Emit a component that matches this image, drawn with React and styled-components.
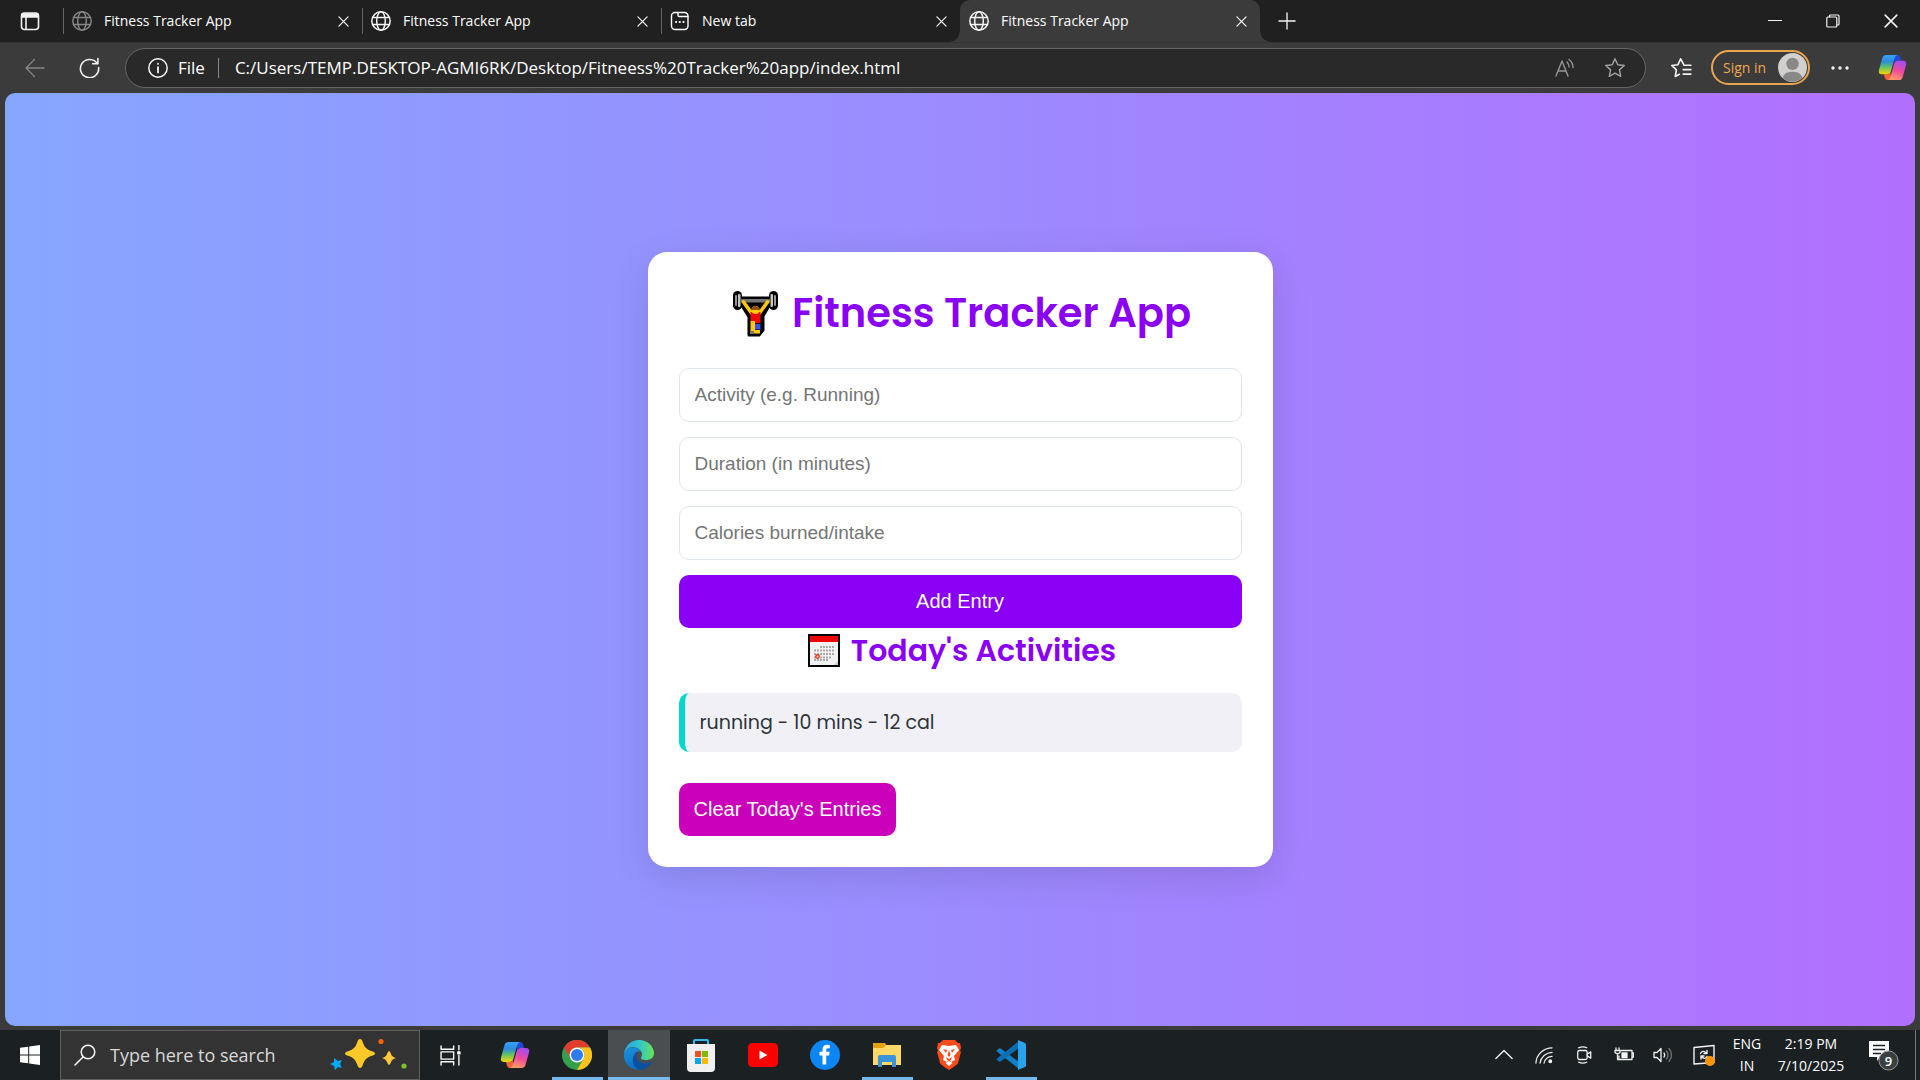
import React, { useId, useState } from "react";
import styled, { createGlobalStyle, css } from "styled-components";

const ui = `"Open Sans", "Noto Sans", sans-serif`;
const arial = `"Liberation Sans", Arial, sans-serif`;
const display = `Poppins, Inter, sans-serif`;

const GlobalStyle = createGlobalStyle`
  *, *::before, *::after { box-sizing: border-box; }
  body { margin: 0; background: #3b3b3b; font-family: ${ui}; }
  button, input { font: inherit; color: inherit; }
  button { border: 0; padding: 0; background: none; cursor: pointer; }
  h1, h2, ul { margin: 0; padding: 0; }
  svg { display: block; flex: none; }
`;

const Desktop = styled.div`
  display: flex;
  flex-direction: column;
  min-height: 100vh;
  color: #fff;
`;

/* ---------- browser chrome ---------- */
const TabStrip = styled.header`
  display: flex;
  align-items: stretch;
  height: 42px;
  background: #202020;
  padding-left: 5px;
`;
const IconButton = styled.button`
  display: flex;
  align-items: center;
  justify-content: center;
  flex: none;
  width: ${(p) => p.$w || 50}px;
  color: ${(p) => p.$color || "#f2f2f2"};
`;
const Tabs = styled.nav`
  display: flex;
  align-items: center;
  margin-left: 8px;
`;
const Tab = styled.div`
  display: flex;
  align-items: center;
  width: 299px;
  height: 26px;
  padding-left: 8px;
  border-left: 1px solid #666;
  ${(p) =>
    p.$active &&
    css`
      align-self: stretch;
      height: auto;
      border-left: 0;
      width: 300px;
      padding-left: 9px;
      background: #3b3b3b;
      border-radius: 10px 10px 0 0;
      position: relative;
      &::before,
      &::after {
        content: "";
        position: absolute;
        bottom: 0;
        width: 10px;
        height: 10px;
      }
      &::before {
        right: 100%;
        background: radial-gradient(circle at 0 0, transparent 9px, #3b3b3b 10px);
      }
      &::after {
        left: 100%;
        background: radial-gradient(circle at 100% 0, transparent 9px, #3b3b3b 10px);
      }
    `}
`;
const TabTitle = styled.button`
  display: flex;
  align-items: center;
  gap: 12px;
  flex: 1;
  font-size: 14px;
  line-height: 20px;
  white-space: nowrap;
`;
const WindowControls = styled.div`
  display: flex;
  margin-left: auto;
`;
const Toolbar = styled.div`
  display: flex;
  align-items: center;
  height: 51px;
  padding: 0 5px 1px 8px;
  border-top: 1px solid #333;
`;
const AddressBar = styled.div`
  display: flex;
  align-items: center;
  flex: 1;
  height: 40px;
  margin: 0 9px 0 8px;
  padding: 0 5px 0 22px;
  background: #292929;
  border: 1px solid #666;
  border-radius: 20px;
  font-size: 17px;
`;
const SiteInfo = styled.button`
  display: flex;
  align-items: center;
  gap: 10px;
  height: 20px;
  line-height: 20px;
  padding-right: 13px;
  border-right: 1px solid #888;
`;
const UrlInput = styled.input`
  flex: 1;
  min-width: 0;
  padding: 0;
  margin-left: 16px;
  border: 0;
  outline: 0;
  background: none;
`;
const SignIn = styled.button`
  display: flex;
  align-items: center;
  justify-content: space-between;
  width: 99px;
  height: 35px;
  margin-left: 4px;
  padding: 0 1px 0 10px;
  border: 2px solid #eba550;
  border-radius: 18px;
  color: #f0a850;
  font-size: 14px;
  white-space: nowrap;
`;

/* ---------- web page ---------- */
const Page = styled.main`
  flex: 1;
  display: flex;
  align-items: center;
  justify-content: center;
  margin: 0 5px 4px;
  padding: 20px;
  border-radius: 10px;
  background: linear-gradient(to right, #86a6ff, #b26fff);
`;
const Card = styled.section`
  width: 100%;
  max-width: 625px;
  padding: 31px;
  background: #fff;
  border-radius: 19px;
  box-shadow: 0 10px 38px rgba(0, 0, 0, 0.12);
  color: #2d3436;
  font-family: ${display};
`;
const Title = styled.h1`
  display: flex;
  align-items: center;
  justify-content: center;
  gap: 14px;
  margin-bottom: 25px;
  padding-left: 4px;
  color: #8900f5;
  font-size: 40px;
  line-height: 60px;
  font-weight: 600;
`;
const Subtitle = styled.h2`
  display: flex;
  align-items: center;
  justify-content: center;
  gap: 11px;
  margin-bottom: 20px;
  padding-left: 4px;
  color: #8900f5;
  font-size: 30px;
  line-height: 45px;
  font-weight: 600;
`;
const EntryForm = styled.form`
  display: flex;
  flex-direction: column;
  gap: 15px;
  font-family: ${arial};
`;
const Field = styled.input`
  width: 100%;
  height: 54px;
  padding: 0 15px;
  border: 1px solid #dfe6e9;
  border-radius: 10px;
  background: #fff;
  font-size: 19px;
  &::placeholder { color: #757575; opacity: 1; }
`;
const ActionButton = styled.button`
  height: 53px;
  padding: 0 15px;
  border-radius: 10px;
  background: ${(p) => (p.$danger ? "#cb00ba" : "#8900f5")};
  color: #fff;
  font-family: ${arial};
  font-size: 20px;
`;
const EntryList = styled.ul`
  list-style: none;
  margin-bottom: 31px;
`;
const Entry = styled.li`
  padding: 15px;
  border-left: 6px solid #00d8cc;
  border-radius: 10px;
  background: #f1f0f7;
  font-size: 19px;
  line-height: 29px;
`;

/* ---------- taskbar ---------- */
const Taskbar = styled.footer`
  display: flex;
  height: 50px;
  background: #1b2022;
`;
const SearchBox = styled.label`
  display: flex;
  align-items: center;
  width: 360px;
  margin-right: 2px;
  padding: 0 11px 0 13px;
  background: #333;
  border: 1px solid #606060;
`;
const SearchInput = styled.input`
  flex: 1;
  min-width: 0;
  padding: 0;
  margin-left: 14px;
  border: 0;
  outline: 0;
  background: none;
  font-size: 18px;
  &::placeholder { color: #d8d8d8; opacity: 1; }
`;
const AppButton = styled.button`
  display: flex;
  align-items: center;
  justify-content: center;
  flex: none;
  width: 62px;
  background: ${(p) =>
    p.$state === "active"
      ? "linear-gradient(#76b9ed, #76b9ed) bottom / 100% 3px no-repeat #4b4e50"
      : p.$state === "running"
      ? "linear-gradient(#76b9ed, #76b9ed) bottom / 51px 3px no-repeat"
      : "none"};
`;
const TaskView = styled(AppButton)`
  padding-right: 5px;
`;
const Tray = styled.div`
  display: flex;
  align-items: stretch;
  margin-left: auto;
  padding-right: 4px;
`;
const TrayText = styled.button`
  width: ${(p) => p.$w}px;
  font-size: 14px;
  line-height: 22px;
  text-align: center;
  white-space: nowrap;
`;
const Notifications = styled.button`
  width: 63px;
  padding-left: 16px;
  border-right: 1px solid #777;
`;

/* ---------- icons ---------- */
const Line = ({ s = 20, w = 1.3, vb = 20, children, ...rest }) => (
  <svg width={s} height={s} viewBox={`0 0 ${vb} ${vb}`} fill="none" stroke="currentColor" strokeWidth={w} strokeLinecap="round" strokeLinejoin="round" aria-hidden="true" {...rest}>
    {children}
  </svg>
);
const Globe = ({ dim }) => (
  <Line w="1.5" color={dim ? "#858585" : "#f5f5f5"}>
    <circle cx="10" cy="10" r="9.2" />
    <ellipse cx="10" cy="10" rx="4.3" ry="9.2" />
    <path d="M1.6 6.5h16.8M1.6 13.5h16.8" />
  </Line>
);
const NewTabIcon = () => (
  <Line w="1.4">
    <rect x="1.500" y="1.500" width="16.500" height="17" rx="3.5" />
    <path d="M8 1.8v2.4q0 1.3 1.3 1.3h8.4" />
    <path d="M6 11h.2M9.7 11h.2M13.4 11h.2" strokeWidth="2" />
  </Line>
);
const Cross = ({ s = 11 }) => (
  <Line s={s} vb="12" w="1.4"><path d="M1 1l10 10M11 1L1 11" /></Line>
);
const star = "M10 1.6l2.5 5.4 5.9.7-4.4 4 1.2 5.9L10 14.7l-5.2 2.9L6 11.7l-4.4-4 5.9-.7z";

const Copilot = ({ s = 30 }) => {
  const id = useId();
  return (
    <svg width={s} height={s} viewBox="0 0 30 30" aria-hidden="true">
      <defs>
        <linearGradient id={id + "a"} x1="0" y1="0" x2="0" y2="1">
          <stop offset="0" stopColor="#35a2f5" /><stop offset=".35" stopColor="#2d8bdd" /><stop offset=".62" stopColor="#5fc06a" /><stop offset="1" stopColor="#f5d800" />
        </linearGradient>
        <linearGradient id={id + "b"} x1=".6" y1="0" x2=".3" y2="1">
          <stop offset="0" stopColor="#a64af0" /><stop offset=".5" stopColor="#f04a9e" /><stop offset="1" stopColor="#ff9f62" />
        </linearGradient>
      </defs>
      <path d="M16 2h4q2.4 0 3 2.300l1 3.700h-4q-2 0-2.700 2z" fill="#2547d8" />
      <path d="M14 28h-4q-2.400 0-3-2.300L6 22h4q2 0 2.700-2z" fill="#f2643b" />
      <path d="M8.500 2H20q-2 .4-2.700 3l-4 14q-.9 3-4 3H4q-4 0-3-4.500L4.500 5q.9-3 4-3z" fill={`url(#${id}a)`} />
      <path d="M21.500 28H10q2-.4 2.700-3l4-14q.9-3 4-3H26q4 0 3 4.500L25.500 25q-.9 3-4 3z" fill={`url(#${id}b)`} />
    </svg>
  );
};
const Avatar = () => (
  <svg width="29" height="29" viewBox="0 0 28 28" aria-hidden="true">
    <circle cx="14" cy="14" r="14" fill="#d2d0ce" />
    <circle cx="14" cy="10.500" r="6" fill="#8a8886" />
    <path d="M4.500 24c1-4 4-6 9.500-6s8.500 2 9.500 6a14 14 0 0 1-19 0z" fill="#8a8886" />
  </svg>
);
const Lifter = () => (
  <svg width="45" height="47" viewBox="0 0 45 47" role="img" aria-label="weight lifter">
    <path d="M8 8H37V14L30 26V40L26 45H16V27L8 14Z" fill="#000" stroke="#000" strokeWidth="3" strokeLinejoin="round" />
    <rect x="0" y="1" width="9" height="19" rx="4.500" fill="#000" />
    <rect x="36" y="1" width="9" height="19" rx="4.500" fill="#000" />
    <rect x="8" y="9" width="29" height="3.500" fill="#777" />
    <rect x="2" y="5" width="2" height="11" rx="1" fill="#999" /><rect x="5" y="4" width="2.500" height="13" rx="1" fill="#c4c4c4" />
    <rect x="41" y="5" width="2" height="11" rx="1" fill="#999" /><rect x="37.500" y="4" width="2.500" height="13" rx="1" fill="#c4c4c4" />
    <path d="M10.500 12L18.500 23M34.500 12L26.500 23" stroke="#ffc800" strokeWidth="3.600" strokeLinecap="round" />
    <path d="M17.500 22h10v11H17.500z" fill="#ee0505" />
    <circle cx="22.500" cy="20" r="4" fill="#ffc800" />
    <path d="M18.500 20a4 4 0 0 1 8 0z" fill="#8e5014" />
    <path d="M17.500 31h4.500v9h5v3.500h-9.500z" fill="#ffc800" />
    <path d="M22 34h5.500v5.500H22z" fill="#3d51ee" />
    <path d="M17 41h4v3h-4z" fill="#777" />
  </svg>
);
const Calendar = () => (
  <svg width="32" height="33" viewBox="0 0 32 33" role="img" aria-label="calendar">
    <path d="M0 0h32v33H0z" fill="#000" />
    <path d="M2 2h28v29H2z" fill="#f2f2f2" />
    <path d="M2 2h28v6H2z" fill="#ee0505" />
    <path d="M12 13h15M6 16.500h21M6 20h21M6 23.500h18M6 26h14" stroke="#aaa" strokeWidth="2" strokeDasharray="2 1" />
    <circle cx="9.500" cy="22.500" r="1.700" fill="#fff" stroke="#ee3415" strokeWidth="1.500" />
    <path d="M30 27v4h-4z" fill="#ccc" />
  </svg>
);
const Sparkles = () => (
  <svg width="78" height="34" viewBox="0 0 78 34" aria-hidden="true">
    <path d="M30 1q2 0 3 4 2 6 8 8 4 1 4 2.500t-4 2.500q-6 2-8 8-1 4-3 4t-3-4q-2-6-8-8-4-1-4-2.500t4-2.500q6-2 8-8 1-4 3-4z" fill="#ffc928" />
    <path d="M59 13q1 0 2 3 1 3 5 4-4 1-5 4-1 3-2 3t-2-3q-1-3-5-4 4-1 5-4 1-3 2-3z" fill="#ffc83d" />
    <path d="M4 20l4 3 4-1-2 4 2 4-4-1-3 3-1-4-4-2 4-2z" fill="#00a9f4" />
    <circle cx="51" cy="3.500" r="2.600" fill="#f7630c" /><circle cx="74" cy="28" r="2.600" fill="#7ac32f" />
  </svg>
);
const Chrome = () => (
  <svg width="30" height="30" viewBox="0 0 30 30" aria-hidden="true">
    <circle cx="15" cy="15" r="15" fill="#34a04b" />
    <path d="M2 7.500A15 15 0 0 1 28 7.500H15a7.500 7.500 0 0 0-6.500 11.250z" fill="#e33b2e" />
    <path d="M28 7.500A15 15 0 0 1 15 30l6.500-11.250A7.500 7.500 0 0 0 15 7.500z" fill="#fcc31e" />
    <circle cx="15" cy="15" r="7.500" fill="#fff" /><circle cx="15" cy="15" r="6" fill="#2d7cf0" />
  </svg>
);
const Edge = () => (
  <svg width="30" height="30" viewBox="0 0 30 30" aria-hidden="true">
    <defs>
      <linearGradient id="edgeTop"><stop offset="0" stopColor="#2aa5dc" /><stop offset=".5" stopColor="#2fc4cf" /><stop offset="1" stopColor="#69e553" /></linearGradient>
      <linearGradient id="edgeSide" x1="0" y1="0" x2=".3" y2="1"><stop offset="0" stopColor="#1b92de" /><stop offset="1" stopColor="#0b72c8" /></linearGradient>
    </defs>
    <path d="M0 14C1 6 7 0 15 0c9 0 15 7 15 13 0 5-4 7-8 7-4 0-5-1-5-2 0-.8 1-1 1-4 0-3-4-7-9-7-4 0-7 3-9 7z" fill="url(#edgeTop)" />
    <path d="M0 14c2-5 6-6.500 9-6.500 4 0 6.500 2 7.500 4-4-1-7 3-7 7 0 7 5 10 9 10.500C9 32-1 24 0 14z" fill="url(#edgeSide)" />
    <path d="M14 12c-2 2-2 4-1.500 6 1.500 5 7.500 6.500 14.500 3.500.6 0 .8.600.4 1C25 27 20 30 15 30c-5-2-6.500-7-6-11 .4-4 3-7 5-7z" fill="#0c50a0" />
  </svg>
);
const Store = () => (
  <svg width="30" height="34" viewBox="0 0 30 34" aria-hidden="true">
    <path d="M8 8V3q0-1 1-1h12q1 0 1 1v5" fill="none" stroke="#35b5e9" strokeWidth="2.200" />
    <path d="M1 6h28v24q0 4-4 4H5q-4 0-4-4z" fill="#f0f0f0" />
    <path d="M9 13h6v6H9z" fill="#f25022" /><path d="M16 13h6v6h-6z" fill="#7fba00" /><path d="M9 20h6v6H9z" fill="#00a4ef" /><path d="M16 20h6v6h-6z" fill="#ffb900" />
  </svg>
);
const YouTube = () => (
  <svg width="30" height="24" viewBox="0 0 30 24" aria-hidden="true"><rect width="30" height="24" rx="4.500" fill="#f00" /><path d="M11.500 7.500v9l8-4.500z" fill="#fff" /></svg>
);
const Facebook = () => (
  <svg width="30" height="30" viewBox="0 0 30 30" aria-hidden="true"><circle cx="15" cy="15" r="15" fill="#0d86f5" /><path d="M12.500 24.500v-9H9.500v-3.800h3V9.500c0-3 1.800-4.700 4.500-4.700l2.800.2v3.300h-1.700c-1.500 0-1.900.8-1.900 1.800v1.600h3.500l-.6 3.800h-2.900v9z" fill="#fff" /></svg>
);
const Explorer = () => (
  <svg width="28" height="24" viewBox="0 0 28 24" aria-hidden="true">
    <path d="M0 0h12l2 3-2 3H0z" fill="#e3a20a" /><path d="M0 5h10l3-3h15v20H0z" fill="#ffd868" />
    <path d="M5 24V14q0-2 2-2h14q2 0 2 2v10h-4v-5H9v5z" fill="#3b94d8" />
  </svg>
);
const Brave = () => (
  <svg width="26" height="30" viewBox="0 0 26 30" aria-hidden="true">
    <path d="M7 0h12l3 3h2l1 5-1 3 1 1-3 11q-1 2-9 7-8-5-9-7L1 12l1-1-1-3 1-5h2z" fill="#fb4a1c" />
    <path d="M6 5l7 1 7-1 3 5-5 6 1 4-4 2-2-3-2 3-4-2 1-4-5-6z" fill="#fff" />
    <path d="M7 9l4 1-1 3zM19 9l-4 1 1 3zM13 10l1.500 5-1.500 2-1.500-2zM10 17l3 2 3-2-1 3h-4z" fill="#fb4a1c" />
    <path d="M9.500 23l3.500-2 3.500 2-3.500 3z" fill="#fff" />
  </svg>
);
const VsCode = () => (
  <svg width="30" height="30" viewBox="0 0 30 30" aria-hidden="true">
    <path d="M1 10l2-1.500q1-.5 2 .2L23 22v7L1 11.500q-.8-.8 0-1.500z" fill="#1180c8" />
    <path d="M1 20l2 1.500q1 .5 2-.2L23 8V1L1 18.500q-.8.800 0 1.500z" fill="#0a6db4" />
    <path d="M22 0l7 3q1 .5 1 1.500v21q0 1-1 1.500l-7 3z" fill="#29a3ec" />
  </svg>
);

const tabs = [
  { title: "Fitness Tracker App", icon: <Globe dim /> },
  { title: "Fitness Tracker App", icon: <Globe /> },
  { title: "New tab", icon: <NewTabIcon /> },
  { title: "Fitness Tracker App", icon: <Globe />, active: true },
];
const apps = [
  { name: "Copilot", icon: <Copilot /> },
  { name: "Chrome", icon: <Chrome />, state: "running" },
  { name: "Edge", icon: <Edge />, state: "active" },
  { name: "Microsoft Store", icon: <Store /> },
  { name: "YouTube", icon: <YouTube /> },
  { name: "Facebook", icon: <Facebook /> },
  { name: "File Explorer", icon: <Explorer />, state: "running" },
  { name: "Brave", icon: <Brave /> },
  { name: "Visual Studio Code", icon: <VsCode />, state: "running" },
];

function BrowserChrome() {
  return (
    <>
      <TabStrip>
        <IconButton aria-label="Tab actions">
          <Line w="1.600"><rect x="1.500" y="2" width="17" height="16.500" rx="3" /><path d="M2 3h16v3H2z" fill="currentColor" /><path d="M6 6v12" /></Line>
        </IconButton>
        <Tabs aria-label="Open tabs">
          {tabs.map((t, i) => (
            <Tab key={i} $active={t.active}>
              <TabTitle>{t.icon}{t.title}</TabTitle>
              <IconButton $w={38} aria-label="Close tab"><Cross /></IconButton>
            </Tab>
          ))}
        </Tabs>
        <IconButton $w={54} aria-label="New tab"><Line s="18" w="1.500"><path d="M10 1v18M1 10h18" /></Line></IconButton>
        <WindowControls>
          <IconButton $w={58} aria-label="Minimize"><Line s="14" vb="14" w="1.200"><path d="M.5 6.500h13" /></Line></IconButton>
          <IconButton $w={58} aria-label="Restore"><Line s="14" vb="14" w="1.200"><rect x=".8" y="3" width="10" height="10" rx="1" /><path d="M3.500 3V2q0-1 1-1H12q1 0 1 1v8q0 1-1 1h-1" /></Line></IconButton>
          <IconButton $w={58} aria-label="Close window"><Cross s={14} /></IconButton>
        </WindowControls>
      </TabStrip>
      <Toolbar>
        <IconButton $w={54} $color="#858585" aria-label="Back"><Line><path d="M19 10H1M9.500 1.500L1 10l8.500 8.500" /></Line></IconButton>
        <IconButton $w={55} aria-label="Refresh"><Line s="21" w="1.500"><path d="M17.500 6.500A8.700 8.700 0 1 0 18.700 10M18 1.500v5h-5" /></Line></IconButton>
        <AddressBar>
          <SiteInfo>
            <Line w="1.400"><circle cx="10" cy="10" r="9.200" /><path d="M10 9v5.500M10 5.700v.2" strokeWidth="1.700" /></Line>
            File
          </SiteInfo>
          <UrlInput aria-label="Address" defaultValue="C:/Users/TEMP.DESKTOP-AGMI6RK/Desktop/Fitneess%20Tracker%20app/index.html" />
          <IconButton $color="#969696" aria-label="Read aloud"><Line w="1.400"><path d="M1 18L7 3l6 15M3.200 13h7.600M12 4q2 2 2 5M14 1.500q4 3 4 8" /></Line></IconButton>
          <IconButton $color="#a0a0a0" aria-label="Add to favorites"><Line s="22" w="1.300"><path d={star} /></Line></IconButton>
        </AddressBar>
        <IconButton $w={52} aria-label="Favorites"><Line s="22" w="1.500"><path d="M12.500 7L9.700 1.600 7.200 7l-5.600.7 4.200 4-1 6 3.700-2M12.500 7.500H19M12 11.500h7M12 15.500h7" /></Line></IconButton>
        <SignIn>Sign in<Avatar /></SignIn>
        <IconButton $w={60} aria-label="Settings and more"><svg width="18" height="4" viewBox="0 0 18 4" fill="#f2f2f2"><circle cx="2" cy="2" r="1.700" /><circle cx="9" cy="2" r="1.700" /><circle cx="16" cy="2" r="1.700" /></svg></IconButton>
        <IconButton $w={45} aria-label="Copilot"><Copilot s={29} /></IconButton>
      </Toolbar>
    </>
  );
}

function FitnessPage() {
  const [entries, setEntries] = useState(["running - 10 mins - 12 cal"]);
  const add = (e) => {
    e.preventDefault();
    const f = new FormData(e.currentTarget);
    setEntries([...entries, `${f.get("activity")} - ${f.get("duration")} mins - ${f.get("calories")} cal`]);
    e.currentTarget.reset();
  };
  return (
    <Page>
      <Card>
        <Title><Lifter />Fitness Tracker App</Title>
        <EntryForm onSubmit={add}>
          <Field name="activity" aria-label="Activity" placeholder="Activity (e.g. Running)" />
          <Field name="duration" type="number" aria-label="Duration" placeholder="Duration (in minutes)" />
          <Field name="calories" type="number" aria-label="Calories" placeholder="Calories burned/intake" />
          <ActionButton type="submit">Add Entry</ActionButton>
        </EntryForm>
        <Subtitle><Calendar />Today's Activities</Subtitle>
        <EntryList>{entries.map((t, i) => <Entry key={i}>{t}</Entry>)}</EntryList>
        <ActionButton $danger onClick={() => setEntries([])}>Clear Today's Entries</ActionButton>
      </Card>
    </Page>
  );
}

function SystemTaskbar() {
  return (
    <Taskbar>
      <IconButton $w={60} aria-label="Start">
        <svg width="20" height="20" viewBox="0 0 20 20" fill="#fff"><path d="M0 2.800L8.200 1.700v7.800H0zM9.200 1.500L20 0v9.500H9.200zM0 10.500h8.200v7.800L0 17.200zM9.200 10.500H20V20L9.200 18.500z" /></svg>
      </IconButton>
      <SearchBox>
        <Line s="22" vb="22" w="1.500"><circle cx="14" cy="8" r="6.800" /><path d="M9 13l-8 8" /></Line>
        <SearchInput aria-label="Search" placeholder="Type here to search" />
        <Sparkles />
      </SearchBox>
      <TaskView aria-label="Task view">
        <Line s="21" vb="20" w="1.300"><path d="M1 1v3h12V1M1 19v-3h12v3M1 6.500h12v7H1zM18 .5v4M18 10v9" /><path d="M17 6.500h2v2h-2z" fill="currentColor" /></Line>
      </TaskView>
      {apps.map((a) => <AppButton key={a.name} $state={a.state} aria-label={a.name}>{a.icon}</AppButton>)}
      <Tray>
        <IconButton $w={40} aria-label="Show hidden icons"><Line s="18" w="1.500"><path d="M1 14l9-9 9 9" /></Line></IconButton>
        <IconButton $w={40} aria-label="Network"><Line s="18" w="1.300"><path d="M1 19A18 18 0 0 1 19 2M5.500 19A14 14 0 0 1 19 7M10 19A9 9 0 0 1 19 11.500" /><circle cx="17" cy="17" r="1.500" fill="currentColor" /></Line></IconButton>
        <IconButton $w={40} aria-label="Meet now"><Line s="18" w="1.400"><rect x="3" y="5" width="10.500" height="10" rx="2" /><path d="M13.500 9l4-2.500v7l-4-2.500M4 2q5-2 9 0M4 18q5 2 9 0" /></Line></IconButton>
        <IconButton $w={39} aria-label="Battery"><Line s="20" w="1.300"><path d="M7 5.500h11v9H5V11M18 8h1.500v4H18M2 3v2M5 3v2M1 5.500h5v2q-2.500 2.500-5 0zM3.500 9v5.500H5" /><path d="M8 8h5v4.500H8z" fill="currentColor" /></Line></IconButton>
        <IconButton $w={39} aria-label="Volume"><Line w="1.300"><path d="M1 7.500h3l4-4v13l-4-4H1zM11 8q1.500 2 0 4" /><path d="M13.500 6q3 4 0 8M16 3.500q5 6.500 0 13" stroke="#777" /></Line></IconButton>
        <IconButton $w={43} aria-label="Windows Update"><Line s="22" vb="22" w="1.400"><path d="M1 3.500L21 1.500v17L1 20zM14 6.500v3h-3M8 15v-3h3M7.500 9.500q2-4 6-.5M14 12.500q-2 4-6-.5" /><circle cx="17" cy="17" r="5" fill="#ff9800" stroke="none" /></Line></IconButton>
        <TrayText $w={44}>ENG<br />IN</TrayText>
        <TrayText $w={84}>2:19 PM<br />7/10/2025</TrayText>
        <Notifications aria-label="9 notifications">
          <svg width="32" height="34" viewBox="0 0 32 34">
            <path d="M0 3h20v16h-9l-3 4v-4H0z" fill="#fff" /><path d="M4 7.500h12M4 11.500h12M4 15.500h8" stroke="#1b2022" strokeWidth="1.300" />
            <circle cx="19.500" cy="22.500" r="9.500" fill="#3a3f41" stroke="#999" />
            <text x="19.500" y="27.500" textAnchor="middle" fill="#fff" fontSize="13" fontWeight="600">9</text>
          </svg>
        </Notifications>
      </Tray>
    </Taskbar>
  );
}

export default function App() {
  return (
    <Desktop>
      <GlobalStyle />
      <BrowserChrome />
      <FitnessPage />
      <SystemTaskbar />
    </Desktop>
  );
}
